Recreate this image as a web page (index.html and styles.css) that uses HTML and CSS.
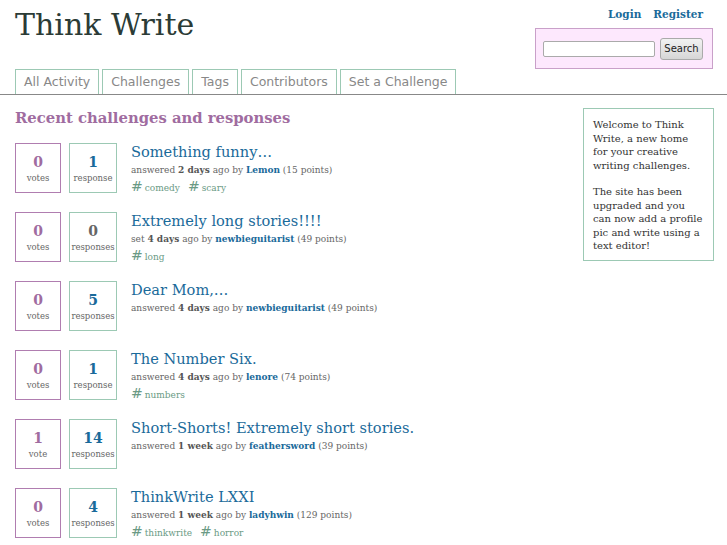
FILE: index.html
```html
<!DOCTYPE html>
<html>
<head>
<meta charset="utf-8">
<link rel="stylesheet" href="styles.css">
</head>
<body>
<header class="header">
  <h1 class="site-title">Think Write</h1>
  <div class="header-right">
    <div class="auth-links"><a href="#">Login</a><a href="#">Register</a></div>
    <form class="search-box"><input type="text" class="search-input"><button type="button" class="search-btn">Search</button></form>
  </div>
</header>
<nav class="tabs">
  <a class="tab" href="#">All Activity</a>
  <a class="tab" href="#">Challenges</a>
  <a class="tab" href="#">Tags</a>
  <a class="tab" href="#">Contributors</a>
  <a class="tab" href="#">Set a Challenge</a>
</nav>
<div class="page">
  <main class="main">
    <h2 class="section-title">Recent challenges and responses</h2>
    <div class="item">
      <div class="count votes"><span class="num">0</span><span class="lbl">votes</span></div>
      <div class="count resp"><span class="num">1</span><span class="lbl">response</span></div>
      <div class="summary">
        <a class="q-title" href="#">Something funny…</a>
        <div class="meta">answered <b>2 days</b> ago by <a class="user" href="#">Lemon</a> (15 points)</div>
        <div class="tags"><span class="tag"><i>#</i>comedy</span><span class="tag"><i>#</i>scary</span></div>
      </div>
    </div>
    <div class="item">
      <div class="count votes"><span class="num">0</span><span class="lbl">votes</span></div>
      <div class="count resp"><span class="num zero">0</span><span class="lbl">responses</span></div>
      <div class="summary">
        <a class="q-title" href="#">Extremely long stories!!!!</a>
        <div class="meta">set <b>4 days</b> ago by <a class="user" href="#">newbieguitarist</a> (49 points)</div>
        <div class="tags"><span class="tag"><i>#</i>long</span></div>
      </div>
    </div>
    <div class="item">
      <div class="count votes"><span class="num">0</span><span class="lbl">votes</span></div>
      <div class="count resp"><span class="num">5</span><span class="lbl">responses</span></div>
      <div class="summary">
        <a class="q-title" href="#">Dear Mom,…</a>
        <div class="meta">answered <b>4 days</b> ago by <a class="user" href="#">newbieguitarist</a> (49 points)</div>
      </div>
    </div>
    <div class="item">
      <div class="count votes"><span class="num">0</span><span class="lbl">votes</span></div>
      <div class="count resp"><span class="num">1</span><span class="lbl">response</span></div>
      <div class="summary">
        <a class="q-title" href="#">The Number Six.</a>
        <div class="meta">answered <b>4 days</b> ago by <a class="user" href="#">lenore</a> (74 points)</div>
        <div class="tags"><span class="tag"><i>#</i>numbers</span></div>
      </div>
    </div>
    <div class="item">
      <div class="count votes"><span class="num">1</span><span class="lbl">vote</span></div>
      <div class="count resp"><span class="num">14</span><span class="lbl">responses</span></div>
      <div class="summary">
        <a class="q-title" href="#">Short-Shorts! Extremely short stories.</a>
        <div class="meta">answered <b>1 week</b> ago by <a class="user" href="#">feathersword</a> (39 points)</div>
      </div>
    </div>
    <div class="item">
      <div class="count votes"><span class="num">0</span><span class="lbl">votes</span></div>
      <div class="count resp"><span class="num">4</span><span class="lbl">responses</span></div>
      <div class="summary">
        <a class="q-title" href="#">ThinkWrite LXXI</a>
        <div class="meta">answered <b>1 week</b> ago by <a class="user" href="#">ladyhwin</a> (129 points)</div>
        <div class="tags"><span class="tag"><i>#</i>thinkwrite</span><span class="tag"><i>#</i>horror</span></div>
      </div>
    </div>
  </main>
  <aside class="sidebar">
    <p>Welcome to Think Write, a new home for your creative writing challenges.</p>
    <p>The site has been upgraded and you can now add a profile pic and write using a text editor!</p>
  </aside>
</div>
</body>
</html>
```
FILE: styles.css
```css
* { box-sizing: border-box; }
body {
  margin: 0;
  font-family: "DejaVu Serif", serif;
  color: #333;
  background: #fff;
}
a { text-decoration: none; }
.header {
  display: flex;
  justify-content: space-between;
  height: 69px;
  padding: 0 15px;
}
.site-title {
  margin: 7px 0 0;
  font-size: 30px;
  font-weight: normal;
  line-height: 35px;
  color: #2b3b36;
}
.header-right {
  display: flex;
  flex-direction: column;
  align-items: flex-end;
}
.auth-links {
  display: flex;
  gap: 12px;
  margin-top: 8px;
  padding-right: 9px;
  font-size: 10.5px;
  font-weight: bold;
  line-height: 13px;
}
.auth-links a { color: #1a6a9a; }
.search-box {
  margin: 7px -1px 0 0;
  width: 178px;
  height: 41px;
  border: 1px solid #c9a0c9;
  background: #fde8fd;
  display: flex;
  align-items: center;
  padding: 0 9px 0 7px;
  gap: 5px;
}
.search-input {
  width: 112px;
  height: 16px;
  border: 1px solid #aaa;
  border-radius: 2px;
  background: #fff;
  padding: 0;
}
.search-btn {
  height: 22px;
  width: 43px;
  padding: 0;
  font-family: "DejaVu Sans", sans-serif;
  font-size: 10px;
  color: #222;
  border: 1px solid #aaa;
  border-radius: 3px;
  background: linear-gradient(#f2f2f2, #d6d6d6);
}
.tabs {
  display: flex;
  gap: 3px;
  padding-left: 15px;
  border-bottom: 1px solid #888;
  height: 26px;
}
.tab {
  height: 25px;
  line-height: 24px;
  padding: 0 8px;
  border: 1px solid #9cc9b4;
  border-bottom: none;
  font-family: "DejaVu Sans", sans-serif;
  font-size: 12.5px;
  color: #888;
}
.page {
  display: flex;
  justify-content: space-between;
  padding: 0 13px 0 15px;
}
.main { flex: 1; }
.section-title {
  margin: 14px 0 16px;
  font-size: 14.8px;
  line-height: 18px;
  color: #a06ca0;
}
.item {
  display: flex;
  align-items: flex-start;
  height: 50px;
  margin-bottom: 19px;
}
.count {
  width: 46px;
  height: 50px;
  display: flex;
  flex-direction: column;
  align-items: center;
  padding-top: 10px;
}
.count.votes { border: 1px solid #b07db0; margin-right: 8px; }
.count.resp { border: 1px solid #9cc9b4; margin-right: 14px; width: 48px; }
.num {
  font-size: 14px;
  font-weight: bold;
  line-height: 17px;
}
.votes .num { color: #a06ca0; }
.resp .num { color: #1a6a9a; }
.resp .num.zero { color: #666; }
.lbl {
  font-size: 8.5px;
  line-height: 10px;
  color: #666;
  margin-top: 2px;
}
.summary { display: flex; flex-direction: column; }
.q-title {
  font-size: 14.6px;
  line-height: 18px;
  color: #1a6a9a;
  margin-top: 0;
}
.meta {
  margin-top: 3.5px;
  font-size: 9px;
  line-height: 11px;
  color: #666;
}
.meta b { color: #555; }
.meta .user { color: #1a6a9a; font-weight: bold; }
.tags {
  display: flex;
  gap: 8px;
  margin-top: 3px;
  font-size: 9px;
  line-height: 14px;
  color: #6a9a84;
}
.tag i {
  font-style: normal;
  font-family: "DejaVu Sans", sans-serif;
  font-size: 14px;
  margin-right: 2px;
}
.sidebar {
  margin-top: 13px;
  width: 131px;
  height: 153px;
  border: 1px solid #9cc9b4;
  padding: 9px 9px;
  font-size: 10px;
  line-height: 13.5px;
  color: #333;
}
.sidebar p { margin: 0 0 13px; }
```
